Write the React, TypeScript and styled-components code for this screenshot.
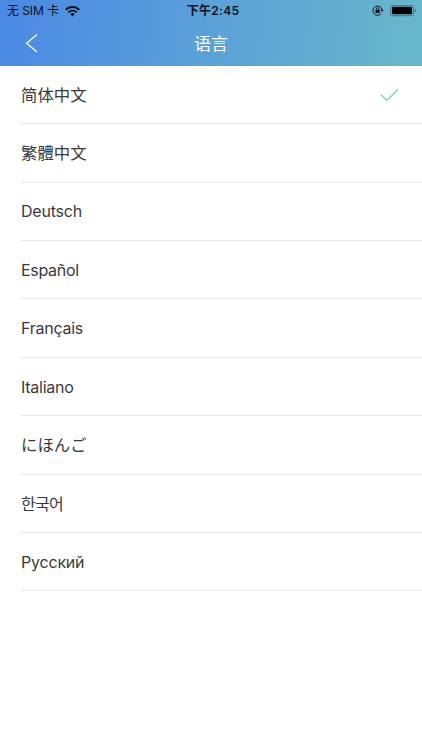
import React from 'react';
import styled, { createGlobalStyle } from 'styled-components';

const GlobalStyle = createGlobalStyle`
  * { box-sizing: border-box; }
  body {
    margin: 0;
    background: #fff;
    font-family: Inter, "Noto Sans CJK SC", sans-serif;
  }
`;

const Screen = styled.main`
  min-height: 750px;
  background: #fff;
`;

const Header = styled.header`
  height: 65.9px;
  background: linear-gradient(97deg, #4b8ae4 3%, #5aa0d8 48%, #68b6cb 96%);
`;

const StatusBar = styled.div`
  display: grid;
  grid-template-columns: 1fr auto 1fr;
  align-items: center;
  height: 22px;
  padding: 0 5px 0 7px;
  color: #0a1119;
  font-size: 12px;
  line-height: 22px;
`;

const Carrier = styled.div`
  display: flex;
  align-items: center;
  gap: 6px;
  letter-spacing: -0.1px;
  white-space: pre;
`;

const Clock = styled.time`
  padding-left: 2px;
  font-weight: 600;
  letter-spacing: 0.3px;
`;

const Indicators = styled.div`
  display: flex;
  align-items: center;
  justify-content: flex-end;
  gap: 6px;
`;

const NavBar = styled.nav`
  display: grid;
  grid-template-columns: 64px 1fr 64px;
  align-items: center;
  height: 43px;
`;

const BackButton = styled.button`
  display: flex;
  padding: 0 0 0 25px;
  border: 0;
  background: none;
`;

const Title = styled.h1`
  margin: 0;
  color: #fff;
  font-size: 17px;
  font-weight: 400;
  line-height: 24px;
  text-align: center;
`;

const LanguageList = styled.ul`
  margin: 0;
  padding: 0 0 0 21px;
  list-style: none;
`;

const LanguageRow = styled.li`
  display: flex;
  align-items: center;
  justify-content: space-between;
  height: 58.4px;
  padding-right: 23px;
  border-bottom: 1px solid #e7e7e7;
`;

const Label = styled.span<{ $font?: string; $spacing?: number; $size?: number; $lift?: number }>`
  padding-bottom: ${({ $lift = 0 }) => $lift}px;
  color: #3a3a3a;
  font-family: ${({ $font }) => ($font ? `"${$font}", sans-serif` : 'Inter, sans-serif')};
  font-size: ${({ $size = 16 }) => $size}px;
  letter-spacing: ${({ $spacing = -0.2 }) => $spacing}px;
  line-height: 24px;
`;

const languages = [
  { code: 'zh-Hans', name: '简体中文', font: 'Noto Sans CJK SC', size: 16.4, spacing: 0, lift: 2 },
  { code: 'zh-Hant', name: '繁體中文', font: 'Noto Sans CJK TC', size: 16.4, spacing: 0, lift: 2 },
  { code: 'de', name: 'Deutsch' },
  { code: 'es', name: 'Español', spacing: -0.3 },
  { code: 'fr', name: 'Français', spacing: -0.25 },
  { code: 'it', name: 'Italiano', spacing: -0.25 },
  { code: 'ja', name: 'にほんご', font: 'Noto Sans CJK JP', size: 16.4, spacing: 0, lift: 2 },
  { code: 'ko', name: '한국어', font: 'Noto Sans CJK KR', size: 16, spacing: -0.7 },
  { code: 'ru', name: 'Русский' },
];

const WifiIcon = () => (
  <svg width="15" height="11" viewBox="0 0 15 11" fill="none" stroke="#0a1119">
    <path d="M.8 3.7a9.6 9.6 0 0 1 13.4 0" strokeWidth="2" />
    <path d="M3.2 6.3a6.2 6.2 0 0 1 8.6 0" strokeWidth="1.8" />
    <path d="M5.2 8.1a3.4 3.4 0 0 1 4.6 0L7.5 10.4Z" fill="#0a1119" stroke="none" />
  </svg>
);

const RotationLockIcon = () => (
  <svg width="12" height="12" viewBox="0 0 12 12" fill="none" stroke="#0a1119">
    <path d="M9.2 8.5a4.6 4.6 0 1 1 .9-3.6" strokeWidth="1" />
    <path d="M8.4 4.7h3.3L10 7Z" fill="#0a1119" stroke="none" />
    <path d="M4.3 4.9V4a1.3 1.3 0 0 1 2.6 0v.9" strokeWidth=".9" />
    <rect x="3.5" y="4.7" width="4.2" height="3.2" rx=".4" fill="#0a1119" stroke="none" />
  </svg>
);

const BatteryIcon = () => (
  <svg width="27" height="12" viewBox="0 0 27 12">
    <rect x=".6" y=".3" width="22.8" height="10.4" rx="2.3" fill="none" stroke="#3f6d7c" strokeWidth=".9" />
    <rect x="2" y="1.7" width="20" height="7.6" rx="1" fill="#000" />
    <path d="M24.6 3.7c1.6.5 1.6 3.1 0 3.6Z" fill="#3f6d7c" />
  </svg>
);

const BackIcon = () => (
  <svg width="13" height="19" viewBox="0 0 13 19" fill="none" stroke="#fff" strokeWidth="1.25">
    <path d="M12 .5 1.6 9.2 12 17.9" />
  </svg>
);

const CheckIcon = () => (
  <svg width="19" height="13" viewBox="0 0 19 13" fill="none" stroke="#75d6b0" strokeWidth="1.3">
    <path d="m1 6.8 6 5.6L18 1.2" />
  </svg>
);

export default function App() {
  return (
    <>
      <GlobalStyle />
      <Screen>
        <Header>
          <StatusBar>
            <Carrier>无 SIM 卡<WifiIcon /></Carrier>
            <Clock>下午2:45</Clock>
            <Indicators><RotationLockIcon /><BatteryIcon /></Indicators>
          </StatusBar>
          <NavBar>
            <BackButton aria-label="返回"><BackIcon /></BackButton>
            <Title>语言</Title>
          </NavBar>
        </Header>
        <LanguageList>
          {languages.map(({ code, name, font, size, spacing, lift }) => (
            <LanguageRow key={code} lang={code}>
              <Label $font={font} $size={size} $spacing={spacing} $lift={lift}>{name}</Label>
              {code === 'zh-Hans' && <CheckIcon />}
            </LanguageRow>
          ))}
        </LanguageList>
      </Screen>
    </>
  );
}
